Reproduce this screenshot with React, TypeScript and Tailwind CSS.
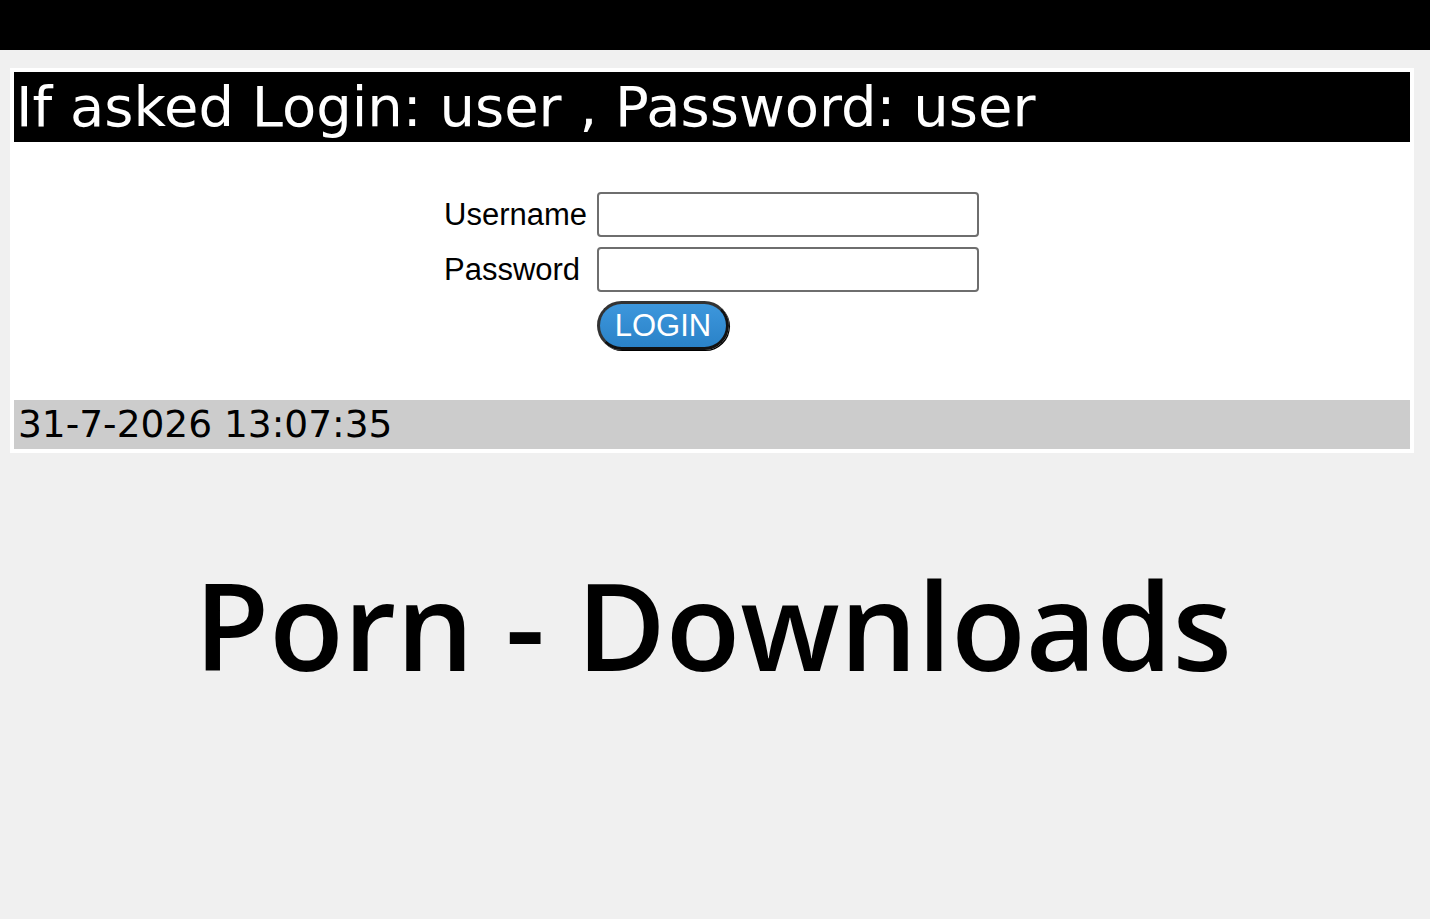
import React from "react";

export default function App() {
  return (
    <div className="min-h-[919px] bg-[#f0f0f0]">
      <div className="h-[50px] bg-black" />
      <div className="ml-[10px] mr-[16px] mt-[18px] bg-white p-[4px]">
        <div
          className="h-[70px] bg-black text-white text-[56px] leading-[70px] pl-[2px] whitespace-nowrap overflow-hidden"
          style={{ fontFamily: '"DejaVu Sans", Verdana, sans-serif' }}
        >
          If asked Login: user , Password: user
        </div>
        <div className="flex justify-center pt-[50px] pb-[50px] pr-[2px]">
          <div
            className="grid grid-cols-[auto_auto] gap-x-[10px] gap-y-[10px] items-center"
            style={{ fontFamily: '"Liberation Sans", Arial, sans-serif' }}
          >
            <div className="text-[31px] leading-[45px] text-black pl-[1px]">Username</div>
            <input className="block w-[382px] h-[45px] border-2 border-[#6e6e6e] rounded-[4px] bg-white outline-none" />
            <div className="text-[31px] leading-[45px] text-black pl-[1px]">Password</div>
            <input type="password" className="block w-[382px] h-[45px] border-2 border-[#6e6e6e] rounded-[4px] bg-white outline-none" />
            <div />
            <div className="-mt-[1px] h-[49px]">
              <button
                className="block w-[132px] h-[49px] rounded-full border-[3px] border-[#333] border-b-[#111] border-r-[#111] bg-gradient-to-b from-[#3d97dc] to-[#2a82c8] text-white text-[31px] leading-none shadow-[1px_1px_0_#000]"
                style={{ fontFamily: '"Liberation Sans", Arial, sans-serif' }}
              >
                LOGIN
              </button>
            </div>
          </div>
        </div>
        <div
          className="h-[49px] bg-[#cccccc] text-black text-[37.5px] leading-[49px] pl-[4px] whitespace-nowrap"
          style={{ fontFamily: '"DejaVu Sans", Verdana, sans-serif' }}
        >
          31-7-2026 13:07:35
        </div>
      </div>
      <div
        className="text-center text-black text-[122px] leading-none mt-[110px] font-semibold pr-[4px]"
        style={{ fontFamily: '"Open Sans", "Noto Sans", sans-serif' }}
      >
        Porn - Downloads
      </div>
    </div>
  );
}
